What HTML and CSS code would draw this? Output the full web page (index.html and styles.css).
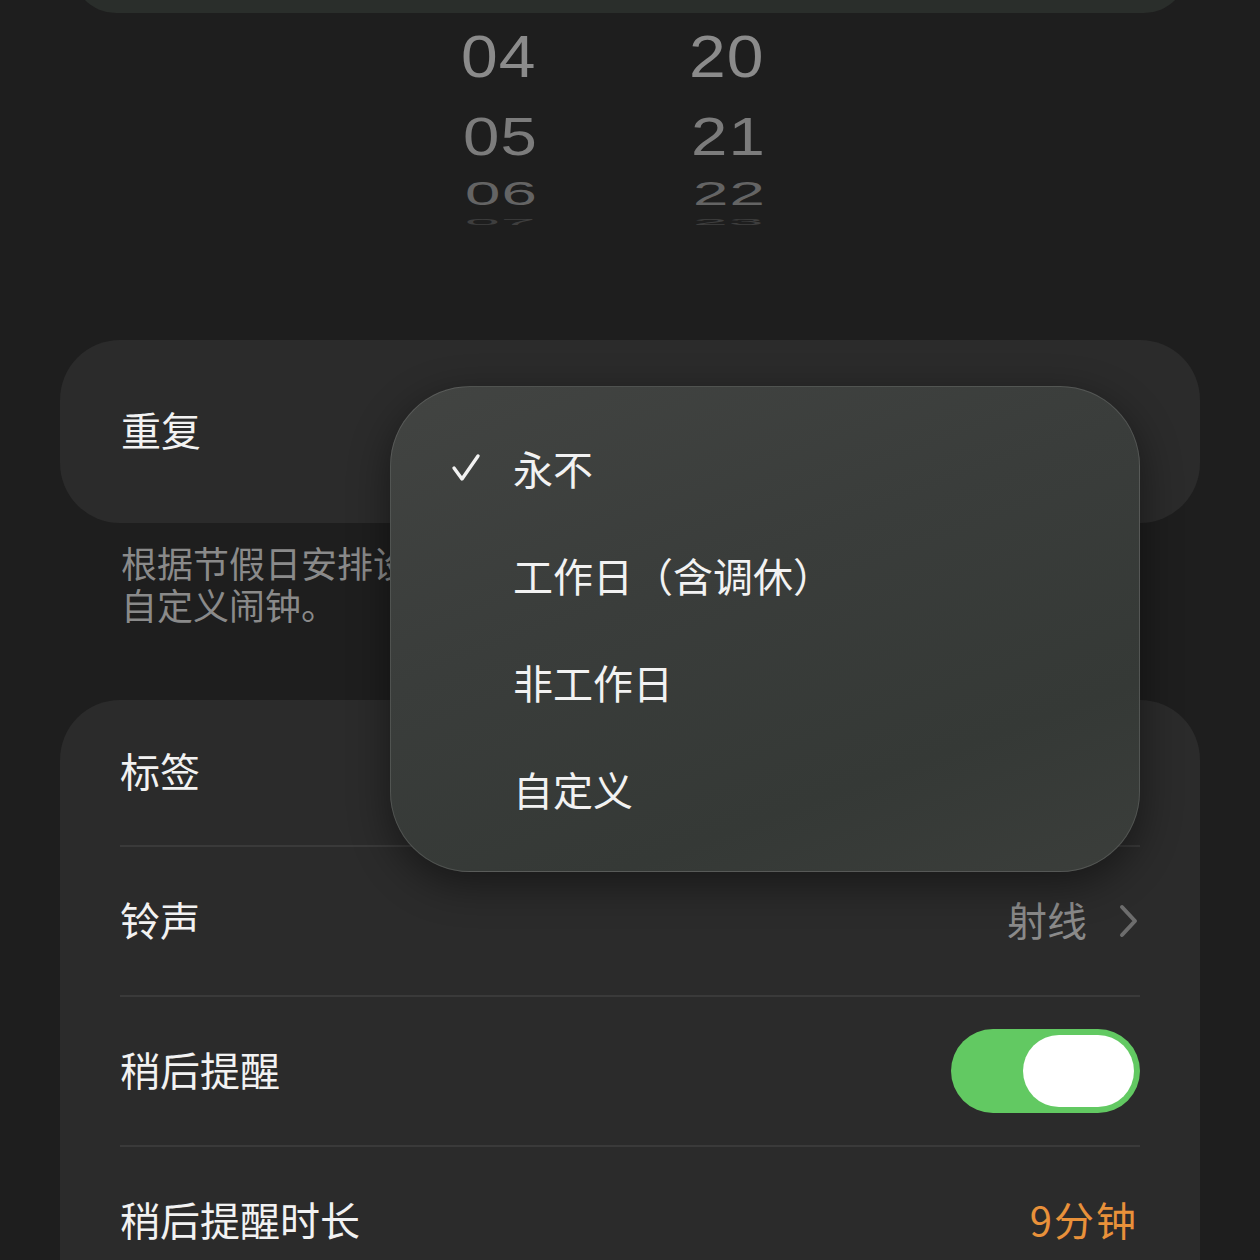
FILE: index.html
```html
<!DOCTYPE html>
<html lang="zh-CN">
<head>
<meta charset="utf-8">
<title>闹钟</title>
<link rel="stylesheet" href="styles.css">
</head>
<body>
<div class="screen">
  <div class="top-card"></div>

  <div class="picker">
    <div class="wheel">
      <div class="num n1">04</div>
      <div class="num n2">05</div>
      <div class="num n3">06</div>
      <div class="num n4">07</div>
    </div>
    <div class="wheel">
      <div class="num n1">20</div>
      <div class="num n2">21</div>
      <div class="num n3">22</div>
      <div class="num n4">23</div>
    </div>
  </div>

  <div class="card card-repeat">
    <div class="label">重复</div>
  </div>

  <p class="desc">根据节假日安排设置<br>自定义闹钟。</p>

  <div class="card card-list">
    <div class="row"><div class="label">标签</div></div>
    <div class="sep"></div>
    <div class="row">
      <div class="label">铃声</div>
      <div class="value">
        <span class="grey">射线</span>
        <svg class="chev" width="20" height="34" viewBox="0 0 20 34"><polyline points="3,3 16,17 3,31" fill="none" stroke="#6d6d6d" stroke-width="4" stroke-linecap="round" stroke-linejoin="round"/></svg>
      </div>
    </div>
    <div class="sep"></div>
    <div class="row">
      <div class="label">稍后提醒</div>
      <div class="toggle"><div class="knob"></div></div>
    </div>
    <div class="sep"></div>
    <div class="row">
      <div class="label">稍后提醒时长</div>
      <div class="orange">9分钟</div>
    </div>
  </div>

  <div class="menu">
    <div class="item">
      <span class="check"><svg width="30" height="30" viewBox="0 0 30 30"><polyline points="3,15 11,26 27,3" fill="none" stroke="#f2f2f2" stroke-width="3.4" stroke-linecap="round" stroke-linejoin="round"/></svg></span>
      <span class="text">永不</span>
    </div>
    <div class="item"><span class="check"></span><span class="text">工作日（含调休）</span></div>
    <div class="item"><span class="check"></span><span class="text">非工作日</span></div>
    <div class="item"><span class="check"></span><span class="text">自定义</span></div>
  </div>
</div>
</body>
</html>
```

FILE: styles.css
```css
html, body {
  margin: 0;
  padding: 0;
  background: #1e1e1e;
}
.screen {
  position: relative;
  width: 1260px;
  height: 1260px;
  overflow: hidden;
  background: #1e1e1e;
  font-family: "Noto Sans CJK SC", "Noto Sans", sans-serif;
  color: #f2f2f2;
}
.top-card {
  height: 60px;
  margin: -47px 72px 0 72px;
  background: #2a2e2b;
  border-radius: 0 0 44px 44px;
}
.picker {
  height: 327px;
  box-sizing: border-box;
  padding-top: 4px;
  padding-left: 461px;
  display: flex;
}
.wheel {
  width: 228px;
  display: flex;
  flex-direction: column;
}
.num {
  font-family: "Liberation Sans", Arial, sans-serif;
  font-size: 60px;
  line-height: 80px;
  height: 80px;
  color: #8b8b8b;
  letter-spacing: 1px;
  transform-origin: left center;
  transform: scaleX(1.1);
}
.n1 { height: 80px; }
.n2 { height: 80px; color: #7c7c7c; transform: scale(1.09, 0.9); margin-left: 2px; }
.n3 { height: 34px; line-height: 34px; color: #646464; transform: scale(1.06, 0.55); margin-left: 4px; }
.n4 { height: 22px; line-height: 22px; color: #3e3e3e; transform: scale(1.04, 0.16); margin-left: 4px; }

.card {
  margin: 0 60px;
  background: #2b2b2b;
  border-radius: 60px;
}
.card-repeat {
  height: 183px;
  display: flex;
  align-items: center;
  padding-left: 61px;
}
.label {
  font-size: 40px;
  line-height: 48px;
  padding-bottom: 5px;
  color: #f2f2f2;
}
.desc {
  margin: 18px 0 0 121px;
  height: 159px;
  white-space: nowrap;
  font-size: 36px;
  line-height: 42px;
  color: #8a8a8a;
}
.card-list {
  height: 620px;
  padding: 0 60px;
}
.row {
  height: 148px;
  display: flex;
  align-items: center;
  justify-content: space-between;
}
.row:first-child {
  height: 145px;
}
.sep {
  height: 2px;
  background: #3a3a3a;
}
.value {
  display: flex;
  align-items: center;
  gap: 30px;
}
.grey {
  font-size: 40px;
  color: #8a8a8a;
  padding-bottom: 5px;
  margin-right: 2px;
}
.chev {
  display: block;
  margin-right: 1px;
}
.orange {
  font-size: 40px;
  color: #e9913a;
  margin-right: 2px;
  padding-bottom: 5px;
  letter-spacing: 2px;
}
.toggle {
  width: 189px;
  height: 84px;
  border-radius: 42px;
  background: #62c962;
  display: flex;
  align-items: center;
  justify-content: flex-end;
  padding-right: 6px;
  box-sizing: border-box;
}
.knob {
  width: 111px;
  height: 72px;
  border-radius: 36px;
  background: #ffffff;
}

.menu {
  position: absolute;
  left: 390px;
  top: 386px;
  width: 750px;
  height: 486px;
  box-sizing: border-box;
  padding-top: 27px;
  border-radius: 80px;
  background: linear-gradient(160deg, #424442 0%, #3a3d3b 40%, #353936 75%, #3b3e3b 100%);
  border: 1.5px solid rgba(255, 255, 255, 0.13);
  box-shadow: 0 12px 40px rgba(0, 0, 0, 0.45);
}
.item {
  height: 107px;
  display: grid;
  grid-template-columns: 122px 1fr;
  align-items: center;
}
.check {
  padding-left: 60px;
  display: flex;
  align-items: center;
}
.check svg { display: block; }
.text {
  font-size: 40px;
  line-height: 48px;
  color: #f2f2f2;
}
```
